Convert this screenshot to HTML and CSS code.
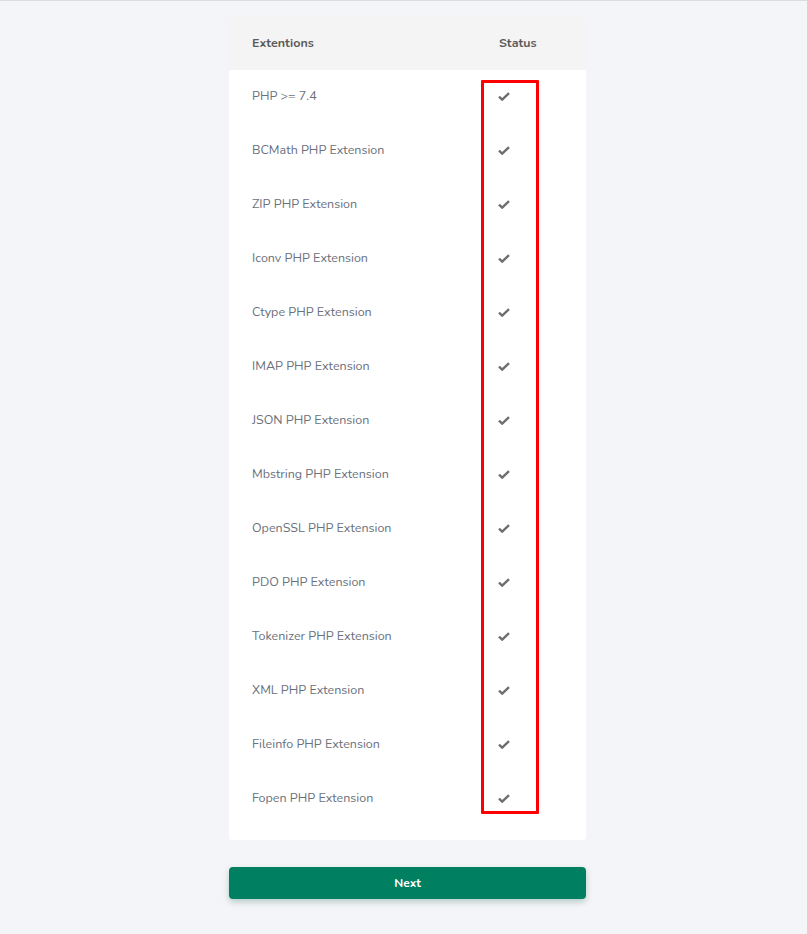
FILE: index.html
```html
<!DOCTYPE html>
<html>
<head>
<meta charset="utf-8">
<link rel="stylesheet" href="styles.css">
</head>
<body>
<div class="topline"></div>
<main class="wrap">
  <section class="card">
    <div class="head">
      <div class="col-name">Extentions</div>
      <div class="col-status">Status</div>
    </div>
    <div class="body">
      <div class="highlight"></div>
      <div class="row"><div class="col-name">PHP &gt;= 7.4</div><div class="col-status"><svg class="check" viewBox="0 0 12 9"><path d="M1 4.6 L4.2 7.6 L11 1.2"/></svg></div></div>
      <div class="row"><div class="col-name">BCMath PHP Extension</div><div class="col-status"><svg class="check" viewBox="0 0 12 9"><path d="M1 4.6 L4.2 7.6 L11 1.2"/></svg></div></div>
      <div class="row"><div class="col-name">ZIP PHP Extension</div><div class="col-status"><svg class="check" viewBox="0 0 12 9"><path d="M1 4.6 L4.2 7.6 L11 1.2"/></svg></div></div>
      <div class="row"><div class="col-name">Iconv PHP Extension</div><div class="col-status"><svg class="check" viewBox="0 0 12 9"><path d="M1 4.6 L4.2 7.6 L11 1.2"/></svg></div></div>
      <div class="row"><div class="col-name">Ctype PHP Extension</div><div class="col-status"><svg class="check" viewBox="0 0 12 9"><path d="M1 4.6 L4.2 7.6 L11 1.2"/></svg></div></div>
      <div class="row"><div class="col-name">IMAP PHP Extension</div><div class="col-status"><svg class="check" viewBox="0 0 12 9"><path d="M1 4.6 L4.2 7.6 L11 1.2"/></svg></div></div>
      <div class="row"><div class="col-name">JSON PHP Extension</div><div class="col-status"><svg class="check" viewBox="0 0 12 9"><path d="M1 4.6 L4.2 7.6 L11 1.2"/></svg></div></div>
      <div class="row"><div class="col-name">Mbstring PHP Extension</div><div class="col-status"><svg class="check" viewBox="0 0 12 9"><path d="M1 4.6 L4.2 7.6 L11 1.2"/></svg></div></div>
      <div class="row"><div class="col-name">OpenSSL PHP Extension</div><div class="col-status"><svg class="check" viewBox="0 0 12 9"><path d="M1 4.6 L4.2 7.6 L11 1.2"/></svg></div></div>
      <div class="row"><div class="col-name">PDO PHP Extension</div><div class="col-status"><svg class="check" viewBox="0 0 12 9"><path d="M1 4.6 L4.2 7.6 L11 1.2"/></svg></div></div>
      <div class="row"><div class="col-name">Tokenizer PHP Extension</div><div class="col-status"><svg class="check" viewBox="0 0 12 9"><path d="M1 4.6 L4.2 7.6 L11 1.2"/></svg></div></div>
      <div class="row"><div class="col-name">XML PHP Extension</div><div class="col-status"><svg class="check" viewBox="0 0 12 9"><path d="M1 4.6 L4.2 7.6 L11 1.2"/></svg></div></div>
      <div class="row"><div class="col-name">Fileinfo PHP Extension</div><div class="col-status"><svg class="check" viewBox="0 0 12 9"><path d="M1 4.6 L4.2 7.6 L11 1.2"/></svg></div></div>
      <div class="row"><div class="col-name">Fopen PHP Extension</div><div class="col-status"><svg class="check" viewBox="0 0 12 9"><path d="M1 4.6 L4.2 7.6 L11 1.2"/></svg></div></div>
    </div>
  </section>
  <button class="next">Next</button>
</main>
</body>
</html>
```
FILE: styles.css
```css
html, body {
  margin: 0;
  padding: 0;
}
body {
  background: #f4f5f9;
  font-family: "Nunito", "Lato", "Open Sans", sans-serif;
  min-height: 934px;
  padding-left: 8px;
}
.topline {
  height: 1px;
  background: #dcdde0;
  margin-left: -8px;
}
.wrap {
  width: 357px;
  margin: 15px auto 0;
  display: flex;
  flex-direction: column;
}
.card {
  background: #fff;
  border-radius: 3px;
  padding-bottom: 14px;
  overflow: hidden;
}
.head {
  height: 54px;
  background: #f4f4f4;
  display: flex;
  align-items: center;
  font-weight: bold;
  font-size: 12.5px;
  color: #5b5b5b;
}
.head .col-name,
.head .col-status {
  padding-bottom: 2px;
}
.col-name {
  padding-left: 23px;
  flex: 1;
}
.col-status {
  width: 87px;
  text-align: left;
}
.body {
  position: relative;
}
.row {
  height: 54px;
  display: flex;
  align-items: center;
  font-size: 12.5px;
  color: #6a707c;
}
.row .col-name {
  padding-bottom: 4px;
}
.row .col-status {
  display: flex;
  align-items: center;
  padding-bottom: 2px;
}
.check {
  width: 12px;
  height: 9px;
  margin-left: -1px;
  fill: none;
  stroke: #6e6e6e;
  stroke-width: 2.4;
}
.highlight {
  position: absolute;
  left: 252px;
  top: 10px;
  width: 52px;
  height: 728px;
  border: 3px solid #ff0000;
  border-radius: 1px;
  pointer-events: none;
}
.next {
  margin-top: 27px;
  height: 32px;
  border: none;
  border-radius: 4px;
  background: #008060;
  color: #fff;
  font-family: inherit;
  font-weight: bold;
  font-size: 12px;
  box-shadow: 0 3px 6px rgba(0, 80, 60, 0.25);
  cursor: pointer;
}
```
